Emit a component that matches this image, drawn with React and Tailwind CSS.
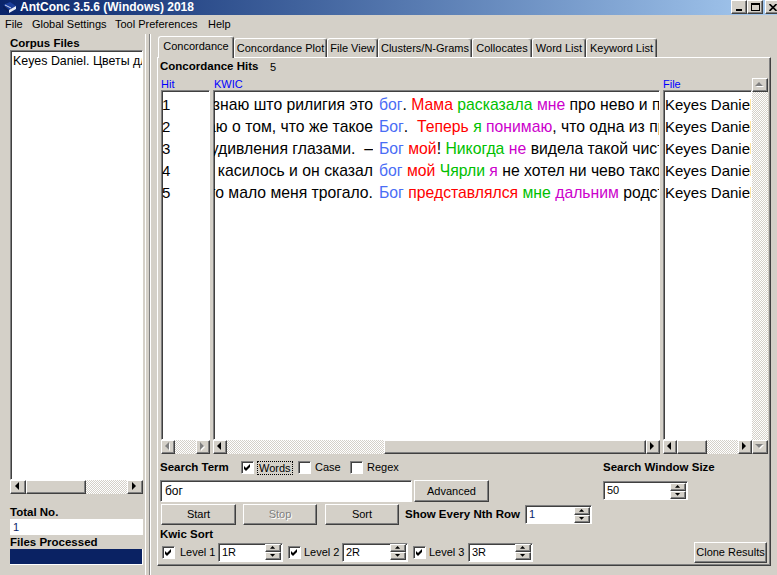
import React from "react";

const raised =
  "bg-[#d4d0c8] border border-t-white border-l-white border-r-[#404040] border-b-[#404040] shadow-[inset_-1px_-1px_0_#808080]";
const sunken =
  "bg-white border border-t-[#808080] border-l-[#808080] border-r-white border-b-white shadow-[inset_1px_1px_0_#404040]";
const dither =
  "bg-[image:repeating-conic-gradient(#d4d0c8_0%_25%,#ffffff_0%_50%)] bg-[length:2px_2px]";

const K = "text-black";
const R = "text-[#ff0000]";
const G = "text-[#00c000]";
const M = "text-[#cc00cc]";

const rows = [
  {
    left: "Я всегда знаю што рилигия это",
    kw: "бог",
    rest: [[". ", K], ["Мама", R], [" ", K], ["расказала", G], [" ", K], ["мне", M], [" про нево и подумала", K]],
  },
  {
    left: "Я думаю о том, что же такое",
    kw: "Бог",
    rest: [[".  ", K], ["Теперь", R], [" ", K], ["я", G], [" ", K], ["понимаю", M], [", что одна из причин", K]],
  },
  {
    left: "Она смотрела на меня широко раскрытыми от удивления глазами.  –",
    kw: "Бог",
    rest: [[" ", K], ["мой", R], ["! ", K], ["Никогда", G], [" ", K], ["не", M], [" видела такой чистой", K]],
  },
  {
    left: "Кагда мы гаварили о том што касилось и он сказал",
    kw: "бог",
    rest: [[" ", K], ["мой", R], [" ", K], ["Чярли", G], [" ", K], ["я", M], [" не хотел ни чево такова", K]],
  },
  {
    left: "Раньше это мало меня трогало.",
    kw: "Бог",
    rest: [[" ", K], ["представлялся", R], [" ", K], ["мне", G], [" ", K], ["дальним", M], [" родственником", K]],
  },
];

const tabs = [
  ["Concordance", "w-[76px]", true],
  ["Concordance Plot", "w-[93px]"],
  ["File View", "w-[51px]"],
  ["Clusters/N-Grams", "w-[94px]"],
  ["Collocates", "w-[60px]"],
  ["Word List", "w-[54px]"],
  ["Keyword List", "w-[71px]"],
];

function Tri({ dir, off, small }) {
  const s = small ? 0.6 : 1;
  const shapes = {
    left: ["4,0 4,8 0,4", 5, 9],
    right: ["0,0 0,8 4,4", 5, 9],
    up: ["0,4 8,4 4,0", 9, 5],
    down: ["0,0 8,0 4,4", 9, 5],
  };
  const [pts, w, h] = shapes[dir];
  return (
    <svg width={w * s + 1} height={h * s + 1} viewBox={`0 0 ${w + 1} ${h + 1}`}>
      {off && <polygon points={pts} fill="#ffffff" transform="translate(1,1)" />}
      <polygon points={pts} fill={off ? "#808080" : "#000000"} />
    </svg>
  );
}

function SBtn({ dir, off, size = "w-[14px] h-[14px]" }) {
  return (
    <div className={`${raised} ${size} shrink-0 flex items-center justify-center`}>
      <Tri dir={dir} off={off} />
    </div>
  );
}

function HScroll({ off, thumb, size }) {
  return (
    <div className="flex shrink-0">
      <SBtn dir="left" off={off} size={size} />
      <div className={`flex-1 flex ${dither}`}>
        {thumb && <div className={`${raised} ${thumb} shrink-0`} />}
      </div>
      <SBtn dir="right" off={off} size={size} />
    </div>
  );
}

function Check({ on = true }) {
  return (
    <div className={`${sunken} w-[13px] h-[13px] shrink-0 flex items-center justify-center`}>
      {on && (
        <svg width="7" height="7" viewBox="0 0 7 7">
          <polygon points="0,2 2,4 6,0 6,3 2,7 0,5" fill="#000" />
        </svg>
      )}
    </div>
  );
}

function Spin({ value, w, color = "text-black" }) {
  return (
    <div className={`${sunken} ${w} h-[19px] shrink-0 flex items-center`}>
      <span className={`flex-1 pl-[3px] text-[11px] leading-[15px] ${color}`}>{value}</span>
      <div className="flex flex-col mr-px">
        <div className={`${raised} w-[16px] h-[8px] flex items-center justify-center`}>
          <Tri dir="up" small />
        </div>
        <div className={`${raised} w-[16px] h-[8px] flex items-center justify-center`}>
          <Tri dir="down" small />
        </div>
      </div>
    </div>
  );
}

function Btn({ children, w, h = "h-[21px]", disabled }) {
  return (
    <div
      className={`${raised} ${w} ${h} shrink-0 flex items-center justify-center text-[11px] ${
        disabled ? "text-[#808080] [text-shadow:1px_1px_0_#ffffff]" : "text-black"
      }`}
    >
      {children}
    </div>
  );
}

function AppIcon() {
  return (
    <svg width="15" height="13" viewBox="0 0 15 13">
      <polygon points="1,4 8,1 14,5 7,9" fill="#1c3f9c" />
      <polygon points="1,4 7,9 7,12 1,7" fill="#0a1f5c" />
      <polygon points="7,9 14,5 14,8 7,12" fill="#e8ecf6" />
      <line x1="3" y1="4" x2="9" y2="7" stroke="#ffffff" strokeWidth="0.8" />
    </svg>
  );
}

export default function App() {
  return (
    <div className="w-[777px] h-[575px] overflow-hidden bg-[#d4d0c8] flex flex-col font-['Liberation_Sans',Arial,sans-serif] text-black">
      {/* title bar */}
      <div className="h-[15px] shrink-0 flex items-center bg-linear-to-r from-[#0a246a] to-[#a6caf0]">
        <div className="w-[18px] flex justify-center">
          <AppIcon />
        </div>
        <span className="ml-[2px] text-white font-bold text-[12px] leading-[15px]">AntConc 3.5.6 (Windows) 2018</span>
        <div className="ml-auto w-[46px] h-full overflow-hidden flex items-start">
          <div className={`${raised} w-[16px] h-[14px] shrink-0 flex items-end justify-center pb-[2px]`}>
            <div className="w-[6px] h-[2px] bg-black" />
          </div>
          <div className={`${raised} w-[16px] h-[14px] shrink-0 flex items-center justify-center`}>
            <div className="w-[9px] h-[8px] border border-black border-t-2" />
          </div>
          <div className={`${raised} ml-[2px] w-[16px] h-[14px] shrink-0 flex items-center justify-center`}>
            <svg width="8" height="7" viewBox="0 0 8 7">
              <path d="M0.5 0 L7.5 7 M7.5 0 L0.5 7" stroke="#000" strokeWidth="1.6" />
            </svg>
          </div>
        </div>
      </div>

      {/* menu */}
      <div className="h-[19px] shrink-0 flex items-center text-[11px] pl-[5px]">
        <span className="w-[27px]">File</span>
        <span className="w-[83px]">Global Settings</span>
        <span className="w-[93px]">Tool Preferences</span>
        <span>Help</span>
      </div>

      <div className="flex-1 flex min-h-0">
        {/* left panel */}
        <div className="w-[145px] shrink-0 pl-[10px] pr-[2px] pt-[2px] flex flex-col">
          <div className="h-[14px] text-[11.5px] leading-[14px] font-bold">Corpus Files</div>
          <div className={`${sunken} h-[430px] overflow-hidden pt-[2px] pl-[2px]`}>
            <div className="text-[12.4px] leading-[16px] whitespace-nowrap">Keyes Daniel. Цветы для Элджернона.txt</div>
          </div>
          <HScroll thumb="w-[60px] h-[14px]" size="w-[16px] h-[14px]" />
          <div className="mt-[12px] h-[13px] text-[11.5px] leading-[13px] font-bold">Total No.</div>
          <div className="h-[16px] bg-white pl-[3px] text-[11px] leading-[16px] text-[#0a246a]">1</div>
          <div className="h-[14px] text-[11.5px] leading-[15px] font-bold">Files Processed</div>
          <div className="h-[16px] bg-[#0a2263] border-r border-b border-white" />
        </div>

        {/* sash */}
        <div className="w-[7px] shrink-0 border-l border-white flex">
          <div className="ml-[3px] w-px bg-[#808080]" />
          <div className="w-px bg-white" />
        </div>

        {/* right panel */}
        <div className="flex-1 pl-[5px] pt-[2px] flex flex-col">
          <div className="h-[21px] shrink-0 flex items-end pl-px">
            {tabs.map(([label, w, active]) => (
              <div
                key={label}
                className={`${w} shrink-0 flex items-center justify-center text-[11px] border-t border-l border-r border-t-white border-l-white border-r-[#404040] rounded-t-[3px] shadow-[inset_-1px_0_0_#808080] bg-[#d4d0c8] ${
                  active ? "h-[22px] -mb-px relative z-10 pb-[2px]" : "h-[19px]"
                }`}
              >
                {label}
              </div>
            ))}
          </div>

          <div className="w-[614px] h-[509px] shrink-0 flex flex-col border border-t-white border-l-white border-r-[#404040] border-b-[#404040] shadow-[inset_-1px_-1px_0_#808080]">
            <div className="mt-[2px] h-[14px] pl-[2px] flex items-center text-[11px]">
              <span className="w-[110px] font-bold text-[11.5px]">Concordance Hits</span>
              <span>5</span>
            </div>

            <div className="mt-[4px] h-[376px] pl-[3px] flex">
              {/* Hit */}
              <div className="w-[49px] flex flex-col">
                <div className="h-[12px] text-[11px] leading-[12px] text-[#0000ff]">Hit</div>
                <div className={`${sunken} h-[350px] overflow-hidden pt-[3px] text-[15px]`}>
                  {rows.map((r, i) => (
                    <div key={i} className="h-[22px] leading-[22px]">
                      {i + 1}
                    </div>
                  ))}
                </div>
                <HScroll off />
              </div>

              {/* KWIC */}
              <div className="ml-[3px] w-[447px] flex flex-col">
                <div className="h-[12px] text-[11px] leading-[12px] text-[#0000ff] pl-px">KWIC</div>
                <div className={`${sunken} h-[350px] overflow-hidden pt-[3px] text-[15.75px]`}>
                  {rows.map((r, i) => (
                    <div key={i} className="h-[22px] leading-[22px] flex whitespace-pre">
                      <div className="w-[159px] shrink-0 flex justify-end overflow-hidden">
                        <span className="shrink-0">{r.left}</span>
                      </div>
                      <span className="ml-[6px] shrink-0 text-[#4a6df5]">{r.kw}</span>
                      {r.rest.map(([t, c], j) => (
                        <span key={j} className={`${c} shrink-0`}>
                          {t}
                        </span>
                      ))}
                    </div>
                  ))}
                </div>
                <HScroll thumb="ml-[157px] w-[262px] h-[14px]" />
              </div>

              {/* File */}
              <div className="ml-[3px] w-[89px] flex flex-col">
                <div className="h-[12px] text-[11px] leading-[12px] text-[#0000ff]">File</div>
                <div className={`${sunken} h-[350px] overflow-hidden pt-[3px] pl-px text-[15px]`}>
                  {rows.map((r, i) => (
                    <div key={i} className="h-[22px] leading-[22px] whitespace-nowrap">
                      Keyes Daniel. Цветы для Элджернона.txt
                    </div>
                  ))}
                </div>
                <HScroll thumb="w-[30px] h-[14px]" />
              </div>

              {/* vertical scrollbar */}
              <div className="w-[16px] flex flex-col">
                <SBtn dir="up" off size="w-[16px] h-[14px]" />
                <div className={`flex-1 ${dither}`} />
                <SBtn dir="down" off size="w-[16px] h-[14px]" />
              </div>
            </div>

            {/* controls */}
            <div className="flex-1 flex text-[11px]">
              <div className="w-[445px] pl-[2px] flex flex-col">
                <div className="mt-[6px] h-[15px] flex items-center">
                  <span className="w-[81px] font-bold text-[11.5px]">Search Term</span>
                  <div className="w-[57px] flex items-center">
                    <Check />
                    <span className="ml-[3px] border border-dotted border-black px-px leading-[12px]">Words</span>
                  </div>
                  <div className="w-[52px] flex items-center">
                    <Check on={false} />
                    <span className="ml-[4px]">Case</span>
                  </div>
                  <div className="flex items-center">
                    <Check on={false} />
                    <span className="ml-[4px]">Regex</span>
                  </div>
                </div>

                <div className="mt-[5px] h-[22px] flex">
                  <div className={`${sunken} w-[252px] h-[22px] pl-[4px] flex items-center text-[12px]`}>бог</div>
                  <div className="ml-[2px]">
                    <Btn w="w-[75px]" h="h-[22px]">Advanced</Btn>
                  </div>
                </div>

                <div className="mt-[2px] h-[21px] flex items-center">
                  <div className="ml-px">
                    <Btn w="w-[75px]">Start</Btn>
                  </div>
                  <div className="ml-[7px]">
                    <Btn w="w-[74px]" disabled>
                      Stop
                    </Btn>
                  </div>
                  <div className="ml-[8px]">
                    <Btn w="w-[74px]">Sort</Btn>
                  </div>
                  <span className="ml-[6px] w-[120px] font-bold text-[11.5px]">Show Every Nth Row</span>
                  <Spin value="1" w="w-[67px]" color="text-[#0a246a]" />
                </div>

                <div className="mt-[2px] h-[14px] leading-[14px] font-bold text-[11.5px]">Kwic Sort</div>

                <div className="mt-px h-[20px] flex items-center pl-[2px]">
                  <div className="w-[56px] flex items-center">
                    <Check />
                    <span className="ml-[5px]">Level 1</span>
                  </div>
                  <Spin value="1R" w="w-[65px]" />
                  <div className="ml-[5px] w-[54px] flex items-center">
                    <Check />
                    <span className="ml-[3px]">Level 2</span>
                  </div>
                  <Spin value="2R" w="w-[66px]" />
                  <div className="ml-[5px] w-[55px] flex items-center">
                    <Check />
                    <span className="ml-[3px]">Level 3</span>
                  </div>
                  <Spin value="3R" w="w-[65px]" />
                </div>
              </div>

              <div className="flex-1 flex flex-col">
                <div className="mt-[6px] h-[15px] flex items-center font-bold text-[11.5px]">Search Window Size</div>
                <div className="mt-[6px]">
                  <Spin value="50" w="w-[85px]" />
                </div>
                <div className="mt-auto mb-[2px] mr-[3px] self-end">
                  <Btn w="w-[73px]">Clone Results</Btn>
                </div>
              </div>
            </div>
          </div>
        </div>
      </div>
    </div>
  );
}
